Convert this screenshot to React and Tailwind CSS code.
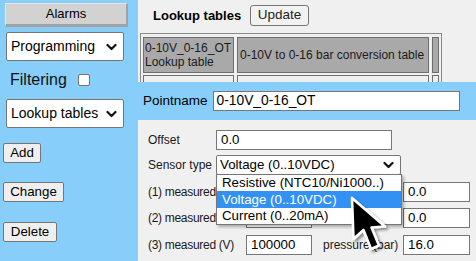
import React from "react";

const Chevron = ({ className = "" }) => (
  <svg width="11" height="8" viewBox="0 0 11 8" className={className}>
    <path d="M1.5 2 L5.5 6 L9.5 2" fill="none" stroke="#111" strokeWidth="2.2" strokeLinecap="round" strokeLinejoin="round" />
  </svg>
);

const SideSelect = ({ label }) => (
  <div className="ml-[6px] w-[118px] h-[29px] bg-white border border-[#767676] rounded-[2px] flex items-center justify-between pl-[4px] pr-[6px] text-[14px] text-black">
    <span>{label}</span>
    <Chevron />
  </div>
);

const Btn = ({ label, w }) => (
  <div
    className="ml-[3px] h-[20px] bg-[#efefef] border border-[#767676] rounded-[2px] flex items-center justify-center text-[13.3px] text-black"
    style={{ width: w }}
  >
    {label}
  </div>
);

const Input = ({ value, w }) => (
  <div
    className="h-[20px] bg-white border border-[#767676] flex items-center pl-[4px] text-[13.3px] text-black"
    style={{ width: w }}
  >
    {value}
  </div>
);

export default function App() {
  return (
    <div className="w-[476px] h-[261px] overflow-hidden flex bg-[#87cefa] font-['Liberation_Sans',Arial,sans-serif] relative">
      {/* Sidebar */}
      <div className="w-[138px] shrink-0 flex flex-col">
        <div className="mt-[3px] ml-[5px] w-[123px] h-[24px] bg-[#d2d2d2] border-t border-l border-t-[#e6e6e6] border-l-[#e6e6e6] border-b-[3px] border-r-[2px] border-b-[#a2a2a2] border-r-[#a2a2a2] flex items-center justify-center text-[13px] text-black">
          Alarms
        </div>
        <div className="mt-[5px]">
          <SideSelect label="Programming" />
        </div>
        <div className="mt-[11px] ml-[10px] h-[16px] flex items-center">
          <span className="text-[16px] text-[#111]">Filtering</span>
          <div className="ml-[11px] w-[12px] h-[12px] bg-white border border-[#767676] rounded-[2px]" />
        </div>
        <div className="mt-[11px]">
          <SideSelect label="Lookup tables" />
        </div>
        <div className="mt-[15px]">
          <Btn label="Add" w={38} />
        </div>
        <div className="mt-[19px]">
          <Btn label="Change" w={61} />
        </div>
        <div className="mt-[20px]">
          <Btn label="Delete" w={54} />
        </div>
      </div>

      {/* Right */}
      <div className="flex-1 flex flex-col">
        <div className="h-[82px] bg-[#f0f0f0] overflow-hidden">
          <div className="mt-[5px] flex items-center h-[21px]">
            <span className="ml-[15px] text-[13px] font-bold text-black">Lookup tables</span>
            <div className="ml-[9px] w-[59px] h-[21px] bg-[#f2f2f2] border border-[#767676] rounded-[3px] flex items-center justify-center text-[13.5px] text-[#222]">
              Update
            </div>
          </div>
          <div className="mt-[7px] ml-[2px] w-[302px] border border-[#8a8a8a] pt-[3px] pl-[2px] flex flex-col gap-[2px] text-[12px] text-[#1a1a1a]">
            <div className="flex gap-[3px]">
              <div className="w-[91px] h-[36px] bg-[#a9a9a9] border border-[#6f6f6f] px-[1px] flex flex-col justify-center leading-[14px]">
                <span>0-10V_0-16_OT</span>
                <span>Lookup table</span>
              </div>
              <div className="w-[192px] h-[36px] bg-[#a9a9a9] border border-[#6f6f6f] px-[2px] flex items-center">
                0-10V to 0-16 bar conversion table
              </div>
              <div className="w-[7px] h-[36px] bg-[#a9a9a9] border border-[#6f6f6f]" />
            </div>
            <div className="flex gap-[3px]">
              <div className="w-[91px] h-[30px] bg-[#f0f0f0] border border-[#6f6f6f]" />
              <div className="w-[192px] h-[30px] bg-[#f0f0f0] border border-[#6f6f6f]" />
              <div className="w-[7px] h-[30px] bg-[#f0f0f0] border border-[#6f6f6f]" />
            </div>
          </div>
        </div>

        <div className="h-[38px] flex items-center">
          <span className="ml-[5px] text-[13.5px] text-black">Pointname</span>
          <div className="ml-[5px] w-[247px] h-[20px] bg-white border border-[#767676] flex items-center pl-[3px] text-[13.8px] text-black">
            0-10V_0-16_OT
          </div>
        </div>

        <div className="flex-1 bg-[#f0f0f0] relative pl-[10px] pt-[10px] text-[12px] text-[#1a1a1a]">
          <div className="flex items-center h-[20px]">
            <span className="w-[68px]">Offset</span>
            <Input value="0.0" w={176} />
          </div>
          <div className="mt-[5px] flex items-center h-[20px]">
            <span className="w-[68px]">Sensor type</span>
            <div className="w-[185px] h-[20px] bg-white border border-[#767676] rounded-[2px] flex items-center justify-between pl-[3px] pr-[6px] text-[13.3px] text-black">
              <span>Voltage (0..10VDC)</span>
              <Chevron />
            </div>
          </div>
          {[
            ["(1) measured (V)", "", "0.0", 7],
            ["(2) measured (V)", "", "0.0", 6],
            ["(3) measured (V)", "100000", "16.0", 7],
          ].map(([l, v1, v2, mt]) => (
            <div key={l} className="flex items-center h-[20px]" style={{ marginTop: mt }}>
              <span className="w-[98px] text-[12px] tracking-[-0.3px] whitespace-nowrap">{l}</span>
              <Input value={v1} w={66} />
              <span className="ml-[11px] w-[80px] text-[12px] whitespace-nowrap">pressure (bar)</span>
              <Input value={v2} w={67} />
            </div>
          ))}

          {/* Dropdown */}
          <div className="absolute left-[78px] top-[54px] w-[186px] h-[51px] bg-white border border-[#767676] shadow-[2px_2px_3px_rgba(0,0,0,0.3)] text-[13.3px] text-black flex flex-col">
            <div className="h-[16px] pl-[5px] flex items-center">Resistive (NTC10/Ni1000..)</div>
            <div className="h-[17px] pl-[5px] flex items-center bg-[#3391f4] text-white">Voltage (0..10VDC)</div>
            <div className="h-[16px] pl-[5px] flex items-center">Current (0..20mA)</div>
          </div>

          {/* Cursor */}
          <svg
            className="absolute left-[210px] top-[75px]"
            width="50"
            height="64"
            viewBox="0 0 50 64"
          >
            <defs>
              <filter id="sh" x="-20%" y="-20%" width="150%" height="150%">
                <feGaussianBlur in="SourceAlpha" stdDeviation="1.5" />
                <feOffset dx="2" dy="2" />
                <feComponentTransfer>
                  <feFuncA type="linear" slope="0.45" />
                </feComponentTransfer>
                <feMerge>
                  <feMergeNode />
                  <feMergeNode in="SourceGraphic" />
                </feMerge>
              </filter>
            </defs>
            <polygon
              points="4,3 5.5,44 15.5,35 23,54 31,50.5 23.5,32.5 37,31.5"
              fill="#000"
              stroke="#fff"
              strokeWidth="2.6"
              strokeLinejoin="round"
              filter="url(#sh)"
            />
          </svg>
        </div>
      </div>
    </div>
  );
}
